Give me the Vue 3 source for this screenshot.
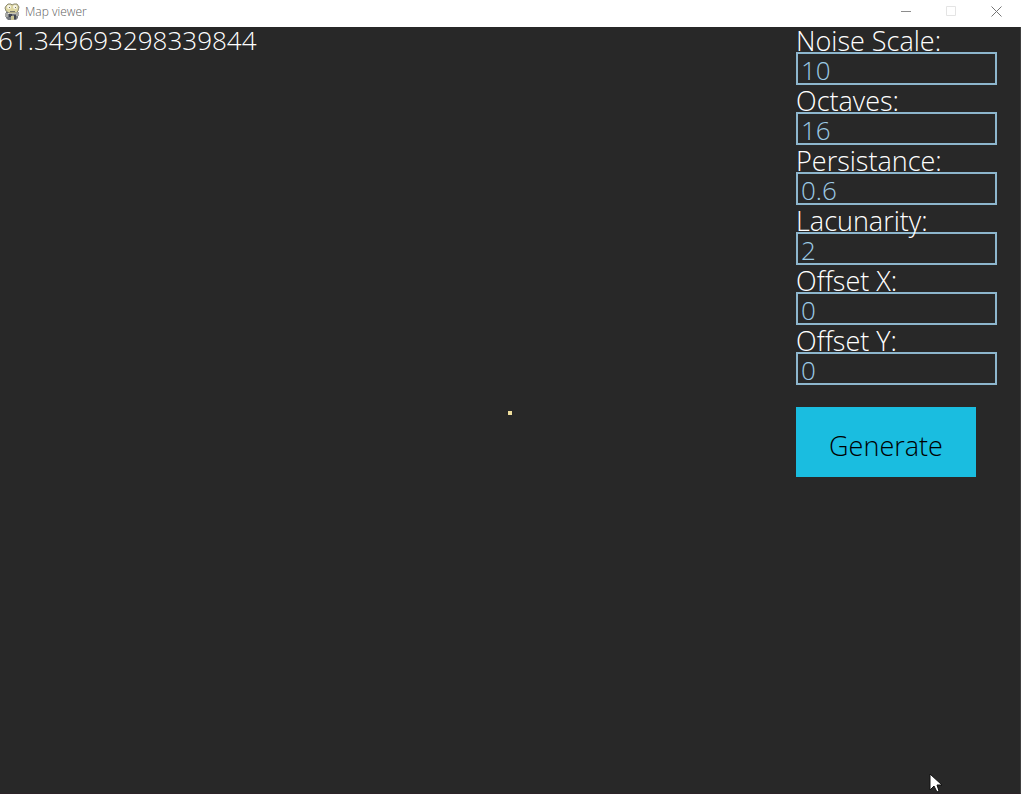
<script setup>
import { reactive, ref } from 'vue'

const elapsed = ref('61.349693298339844')
const fields = reactive([
  { id: 'noise-scale', label: 'Noise Scale:', value: '10' },
  { id: 'octaves', label: 'Octaves:', value: '16' },
  { id: 'persistance', label: 'Persistance:', value: '0.6' },
  { id: 'lacunarity', label: 'Lacunarity:', value: '2' },
  { id: 'offset-x', label: 'Offset X:', value: '0' },
  { id: 'offset-y', label: 'Offset Y:', value: '0' },
])
</script>

<template>
  <div class="window">
    <header class="titlebar">
      <svg class="logo" width="16" height="18" viewBox="0 0 16 18" aria-hidden="true">
        <path d="M2 3 4 1h3l1 1 2-1h3l2 3-1 4-2 2H5L2 8 1 5z" fill="#ddd6a0" stroke="#8d8a72" />
        <path d="M2 9h2v2h8V9h2v6l-2 2H4l-2-2z" fill="#777b80" />
        <path d="M1 10h3v4H1zM12 9h3v4h-3z" fill="#a9aaa5" />
        <path d="M5 11h3v3H5zM10 12h2v4h-2z" fill="#41464f" />
        <path d="M7 13h3v4H7z" fill="#c9c391" />
        <circle cx="5" cy="4" r="2" fill="#f7f5e8" />
        <circle cx="11" cy="4" r="2" fill="#f7f5e8" />
        <path d="M5 4h1v1H5zM11 4h1v1h-1zM6 8h5v1H6z" fill="#77786a" />
      </svg>
      <h1 class="title">Map viewer</h1>
      <div class="controls">
        <button type="button" class="control" aria-label="Minimize">
          <svg width="11" height="11" viewBox="0 0 11 11"><path d="M0 5.5h10" stroke="#8c8c8c" /></svg>
        </button>
        <button type="button" class="control" aria-label="Maximize" disabled>
          <svg width="11" height="11" viewBox="0 0 11 11"><path d="M.5.5h9v9h-9z" fill="none" stroke="#e4e4e4" /></svg>
        </button>
        <button type="button" class="control" aria-label="Close">
          <svg width="11" height="11" viewBox="0 0 11 11"><path d="M.5.5l10 10M10.5.5l-10 10" stroke="#757575" /></svg>
        </button>
      </div>
    </header>

    <main class="viewer">
      <output class="elapsed">{{ elapsed }}</output>
      <span class="tile"></span>
      <form class="panel" @submit.prevent>
        <div v-for="field in fields" :key="field.id" class="field">
          <label class="label" :for="field.id">{{ field.label }}</label>
          <input :id="field.id" v-model="field.value" class="input" type="text" autocomplete="off" />
        </div>
        <button class="generate" type="submit">Generate</button>
      </form>
      <svg class="pointer" width="13" height="20" viewBox="0 0 13 20" aria-hidden="true">
        <path d="M1 1v16l4-4 3 6 2-1-2-6h5z" fill="#fff" stroke="#111" />
      </svg>
    </main>
  </div>
</template>

<style>
body {
  background: #282828;
}
</style>

<style scoped>
.window {
  display: flex;
  flex-direction: column;
  min-height: 100vh;
  font-family: "Open Sans", "Noto Sans", sans-serif;
  font-weight: 300;
}
.titlebar {
  display: flex;
  align-items: center;
  height: 27px;
  padding: 0 2px 4px 4px;
  box-sizing: border-box;
  background: #fff;
}
.logo {
  flex: none;
}
.title {
  flex: 1;
  margin: 0 0 0 5px;
  font-size: 12px;
  line-height: 16px;
  font-weight: 300;
  color: #606060;
}
.controls {
  display: flex;
}
.control {
  display: flex;
  align-items: center;
  justify-content: center;
  width: 45px;
  height: 23px;
  padding: 0;
  border: 0;
  background: none;
}
.viewer {
  position: relative;
  flex: 1;
  display: flex;
  justify-content: space-between;
  align-items: flex-start;
  border-right: 1px solid #404040;
  border-bottom: 1px solid #2c2328;
  background: #282828;
  color: #fff;
  font-size: 26px;
}
.elapsed {
  margin-left: -2px;
  line-height: 26px;
}
.tile {
  position: absolute;
  top: 50%;
  left: 50%;
  width: 4px;
  height: 4px;
  margin: 1px 0 0 -2px;
  background: #eedd9c;
}
.panel {
  display: flex;
  flex-direction: column;
  gap: 2px;
  width: 201px;
  margin-right: 23px;
}
.field {
  display: flex;
  flex-direction: column;
}
.label {
  position: relative;
  z-index: 1;
  height: 25px;
  font-size: 27px;
  line-height: 28px;
  white-space: nowrap;
}
.input {
  box-sizing: border-box;
  width: 100%;
  height: 33px;
  padding: 2px 3px 0;
  border: 2px solid #8db6cd;
  border-radius: 0;
  outline: 0;
  background: transparent;
  color: #9ccae4;
  font: inherit;
  line-height: 27px;
}
.generate {
  align-self: flex-start;
  width: 180px;
  height: 70px;
  margin-top: 20px;
  padding: 6px 0 0;
  border: 0;
  background: #1abde0;
  color: #000;
  font: inherit;
  font-size: 27px;
}
.pointer {
  position: absolute;
  right: 78px;
  bottom: 0;
}
</style>
